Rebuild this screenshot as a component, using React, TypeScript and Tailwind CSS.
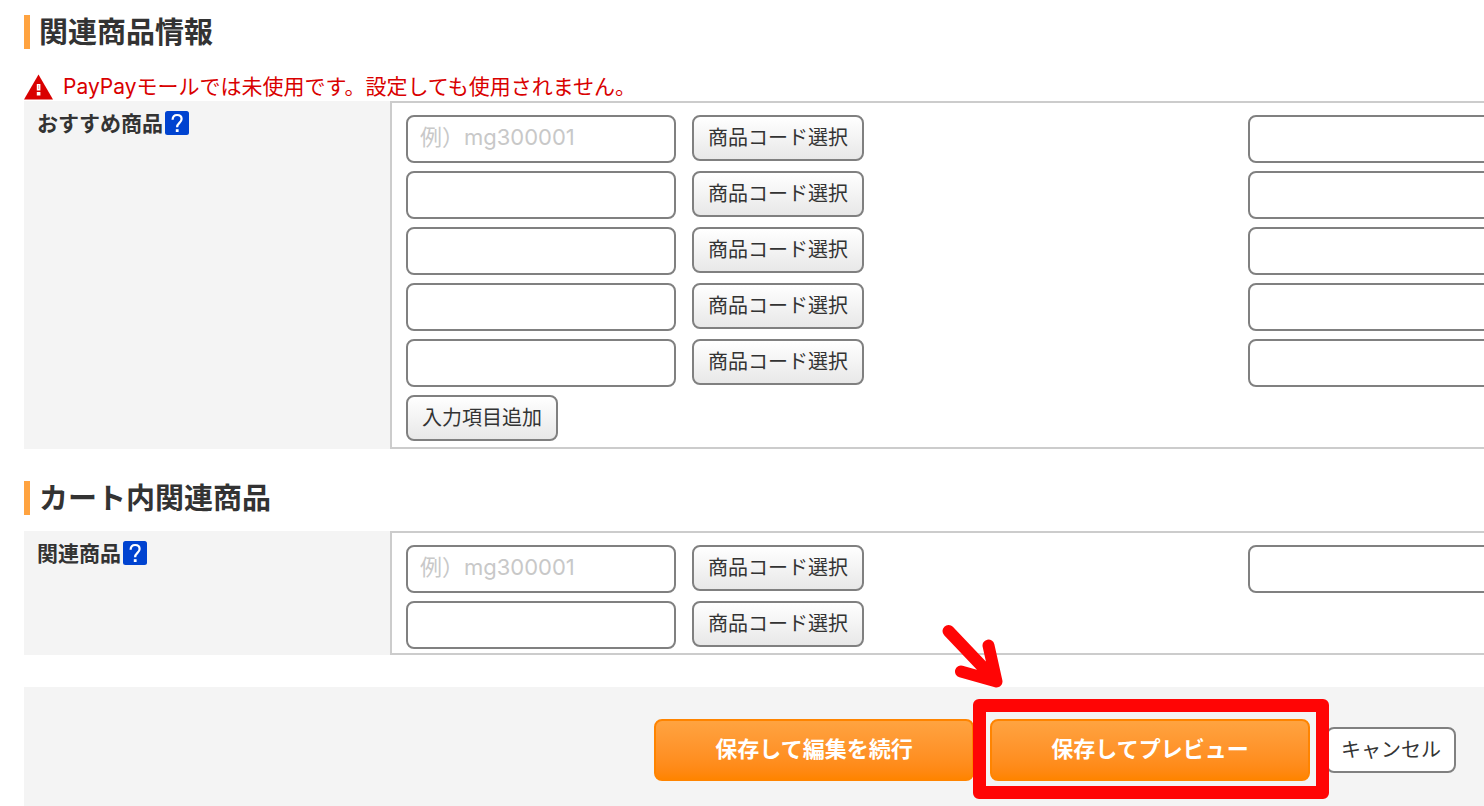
import type { ReactNode } from "react";

function SectionTitle({ children }: { children: ReactNode }) {
  return (
    <h2 className="h-[34px] pl-[9px] border-l-6 border-[#ffa340] text-[29px] leading-[30px] font-bold">
      {children}
    </h2>
  );
}

function HelpButton({ label }: { label: string }) {
  return (
    <button type="button" aria-label={label} className="size-6 shrink-0">
      <svg viewBox="0 0 24 24" className="size-6">
        <rect width="24" height="24" rx="2.5" fill="#0043d0" />
        <path
          d="M7.6 8.8C7.7 5.8 9.4 4 12.1 4c2.7 0 4.5 1.6 4.5 4 0 3.8-4.5 4-4.5 8.2"
          fill="none"
          stroke="#fff"
          strokeWidth="2.2"
        />
        <rect x="10.8" y="18.2" width="2.8" height="2.8" fill="#fff" />
      </svg>
    </button>
  );
}

function GrayButton({ children }: { children: ReactNode }) {
  return (
    <button
      type="button"
      className="h-[46px] px-[14px] pb-0.5 shrink-0 border-2 border-[#808080] rounded-lg bg-linear-to-b from-white to-[#e8e8e8] text-xl leading-7"
    >
      {children}
    </button>
  );
}

function CodeInput({ label, placeholder }: { label: string; placeholder?: string }) {
  return (
    <input
      type="text"
      aria-label={label}
      placeholder={placeholder}
      className="w-[270px] h-12 px-3 pb-1 shrink-0 border-2 border-[#808080] rounded-lg bg-white text-[22px] font-[Inter,'Noto_Sans_CJK_JP',sans-serif] placeholder:text-[#c8c8c8]"
    />
  );
}

type CodeRowProps = {
  label: string;
  placeholder?: string;
  second?: boolean;
};

function CodeRow({ label, placeholder, second }: CodeRowProps) {
  return (
    <div className="flex items-start">
      <div className="flex items-start gap-4 w-[842px] shrink-0">
        <CodeInput label={label} placeholder={placeholder} />
        <GrayButton>商品コード選択</GrayButton>
      </div>
      {second && <CodeInput label={`${label} 2列目`} />}
    </div>
  );
}

function FieldTable({ label, children }: { label: string; children: ReactNode }) {
  return (
    <div className="flex overflow-hidden">
      <div className="flex items-start gap-0.5 w-[366px] shrink-0 pt-[10px] pl-[13px] bg-[#f4f4f4]">
        <span className="text-[21px] leading-[22px] font-bold">{label}</span>
        <HelpButton label={`${label}のヘルプ`} />
      </div>
      <div className="flex flex-col gap-2 flex-1 min-w-0 pt-3 pb-1 pl-[14px] border-2 border-r-0 border-[#ccc]">
        {children}
      </div>
    </div>
  );
}

function SubmitButton({ children }: { children: ReactNode }) {
  return (
    <button
      type="button"
      className="w-80 h-[62px] pb-1.5 border-2 border-[#ff8400] rounded-lg bg-linear-to-b from-[#ffa340] to-[#ff8400] text-[22px] leading-8 font-bold text-white"
    >
      {children}
    </button>
  );
}

export default function App() {
  return (
    <main className="flex flex-col min-h-screen pt-[15px] pl-6 overflow-hidden bg-white text-[#333] font-['Noto_Sans_CJK_JP',sans-serif]">
      <section>
        <SectionTitle>関連商品情報</SectionTitle>
        <p className="flex items-center gap-[10px] h-7 mt-6 text-[21px] leading-7 text-[#d90000] font-[Inter,'Noto_Sans_CJK_JP',sans-serif]">
          <svg viewBox="0 0 29 26" className="w-[29px] h-[26px] shrink-0">
            <path d="M14.5 0.5L29 25.5H0z" fill="#d90000" />
            <path d="M12.8 10h3.6v6.4h-3.6zM12.8 18h3.6v3.4h-3.6z" fill="#fff" />
            <path d="M14.2 11h0.9v4h-0.9z" fill="#f3a0a0" />
          </svg>
          <span className="whitespace-nowrap">
            PayPayモールでは未使用です。設定しても使用されません。
          </span>
        </p>
        <FieldTable label="おすすめ商品">
          <CodeRow label="おすすめ商品1" placeholder="例）mg300001" second />
          <CodeRow label="おすすめ商品2" second />
          <CodeRow label="おすすめ商品3" second />
          <CodeRow label="おすすめ商品4" second />
          <CodeRow label="おすすめ商品5" second />
          <div className="flex items-start h-12">
            <GrayButton>入力項目追加</GrayButton>
          </div>
        </FieldTable>
      </section>

      <section className="mt-8">
        <SectionTitle>カート内関連商品</SectionTitle>
        <div className="mt-4">
          <FieldTable label="関連商品">
            <CodeRow label="関連商品1" placeholder="例）mg300001" second />
            <CodeRow label="関連商品2" />
          </FieldTable>
        </div>
      </section>

      <footer className="flex flex-1 justify-end items-start mt-8 pt-8 pr-7 pb-6 bg-[#f4f4f4]">
        <div className="flex items-center gap-4">
          <SubmitButton>保存して編集を続行</SubmitButton>
          <div className="relative z-10">
            <SubmitButton>保存してプレビュー</SubmitButton>
            <div className="absolute -top-5 -bottom-[18px] -left-[17px] -right-[19px] border-13 border-[#ff0505] rounded-md pointer-events-none"></div>
            <svg
              viewBox="0 0 64 68"
              className="absolute -top-[97px] -left-[50px] w-16 h-[68px] pointer-events-none"
              fill="none"
              stroke="#ff0505"
              strokeWidth="12"
              strokeLinecap="round"
              strokeLinejoin="round"
            >
              <path d="M8.5 9L56.5 59.5M48.5 23.5L56.5 59.5L21 49.5" />
            </svg>
          </div>
          <button
            type="button"
            className="w-[130px] h-[46px] pb-0.5 border-2 border-[#808080] rounded-lg bg-white text-xl leading-7"
          >
            キャンセル
          </button>
        </div>
      </footer>
    </main>
  );
}
